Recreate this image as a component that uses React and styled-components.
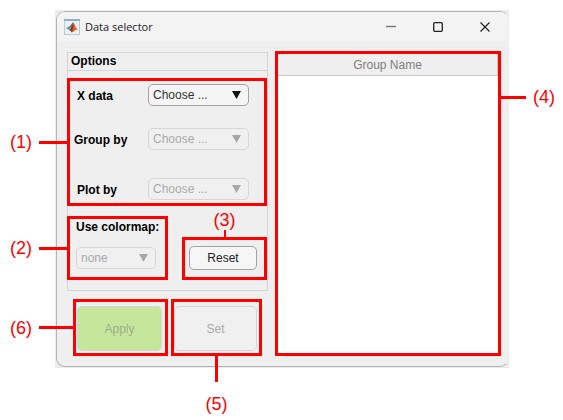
import React from "react";
import styled, { createGlobalStyle } from "styled-components";

const GlobalStyle = createGlobalStyle`
  *, *::before, *::after { box-sizing: border-box; }
  body {
    margin: 0;
    background: #fff;
    color: #000;
    font: 12px/16px "Liberation Sans", Arial, sans-serif;
  }
  button, select { font: inherit; margin: 0; }
`;

const RED = "#ff0000";

const Page = styled.main`
  padding: 10px 54px 48px 55px;
`;

const Backdrop = styled.div`
  padding: 1px 0 1px 1px;
  background: #ececec;
`;

const WindowFrame = styled.section`
  border: 1px solid #b4b4b4;
  border-right-color: #ececec;
  border-radius: 9px;
  background: #efefef;
`;

const TitleBar = styled.header`
  display: flex;
  align-items: center;
  height: 29px;
  padding-left: 7px;
  border-radius: 8px 8px 0 0;
  background: #f3f3f3;
`;

const Title = styled.h1`
  flex: 1;
  margin: 0 0 0 5px;
  font: 400 11px/16px "Open Sans", "Noto Sans", sans-serif;
  color: #222;
`;

const WindowButton = styled.button`
  display: grid;
  place-items: center;
  width: 47px;
  height: 29px;
  padding: 0;
  border: 0;
  background: transparent;
  color: #222;
`;

const Body = styled.div`
  display: grid;
  grid-template-columns: 201px minmax(0, 1fr);
  gap: 7px;
  padding: 10px 7px 10px 10px;
`;

const Controls = styled.div`
  display: flex;
  flex-direction: column;
  gap: 8px;
  padding-top: 1px;
`;

const Panel = styled.section`
  padding-bottom: 11px;
  box-shadow: inset 0 0 0 1px #d4d4d4;
`;

const PanelTitle = styled.h2`
  margin: 0;
  padding: 1px 4px;
  border-bottom: 1px solid #d4d4d4;
  font-size: 12px;
  line-height: 16px;
`;

const Region = styled.div`
  position: relative;
  border: 3px solid ${RED};
`;

const FieldsRegion = styled(Region)`
  display: grid;
  grid-template-columns: 78px 101px;
  grid-template-rows: 44px 50px 22px;
  align-items: start;
  margin: 7px 1px 0 0;
  padding: 3px 0;
`;

const LowerRow = styled.div`
  display: flex;
  justify-content: space-between;
  align-items: flex-end;
  margin: 10px 1px 0 0;
`;

const ColormapRegion = styled(Region)`
  display: flex;
  flex-direction: column;
  gap: 12px;
  width: 101px;
  height: 64px;
  padding: 0 6px;
`;

const ResetRegion = styled(Region)`
  width: 85px;
  padding: 6px 7px 7px 4px;
`;

const Actions = styled.div`
  display: flex;
  gap: 3px;
  padding-left: 6px;
`;

const ActionRegion = styled(Region)`
  width: ${(p) => p.$width};
  height: 57px;
  padding: ${(p) => p.$pad};
`;

const TableRegion = styled(Region)`
  background: #fff;
`;

const Label = styled.label`
  display: block;
  padding-left: ${(p) => p.$indent || "0"};
  font-weight: 700;
  line-height: ${(p) => (p.$compact ? "16px" : "25px")};
  white-space: nowrap;
`;

const SelectBox = styled.div`
  position: relative;
  color: ${(p) => (p.$off ? "#a8a8a8" : "#111")};
  width: ${(p) => p.$width};
`;

const Select = styled.select`
  display: block;
  appearance: none;
  width: 100%;
  height: 22px;
  padding: 0 20px 0 4px;
  border: 1px solid #a2a2a2;
  border-radius: 5px;
  background: #f5f5f5;
  color: #333;
  opacity: 1;

  &:disabled {
    border-color: #d6d6d6;
    background: #f0f0f0;
    color: #aaa;
  }
`;

const Arrow = styled.svg`
  position: absolute;
  top: 7px;
  right: 8px;
  pointer-events: none;
`;

const Button = styled.button`
  display: block;
  width: 100%;
  height: ${(p) => (p.$large ? "45px" : "24px")};
  padding: 0;
  border: 1px solid #a2a2a2;
  border-radius: 5px;
  background: #f6f6f6;
  color: #222;

  &:disabled {
    border-color: #d4d5d8;
    background: ${(p) => (p.$primary ? "#c6e69c" : "#f0f0f0")};
    color: ${(p) => (p.$primary ? "#9dae8c" : "#aaa")};
  }
`;

const Table = styled.table`
  width: 100%;
  border-collapse: separate;
  border-spacing: 0;
`;

const HeadCell = styled.th`
  height: 22px;
  padding: 0;
  border: solid #c6c6c6;
  border-width: 0 1px 1px 0;
  background: #efefef;
  color: #808080;
  font-weight: 400;
  line-height: 20px;
`;

const Callout = styled.div`
  position: absolute;
  display: flex;
  align-items: center;
  color: ${RED};
  font-size: 18px;
  line-height: 20px;
  pointer-events: none;
`;

const LeftCallout = styled(Callout)`
  right: 100%;
  top: 50%;
  gap: 7px;
  transform: translateY(-50%);
`;

const RightCallout = styled(Callout)`
  left: 100%;
  top: 33px;
  flex-direction: row-reverse;
  gap: 7px;
`;

const TopCallout = styled(Callout)`
  bottom: 100%;
  left: 50%;
  flex-direction: column;
  transform: translateX(-50%);
`;

const BottomCallout = styled(Callout)`
  top: 100%;
  left: 50%;
  flex-direction: column-reverse;
  gap: 12px;
  transform: translateX(-50%);
`;

const Leader = styled.i`
  width: ${(p) => (p.$vertical ? p.$weight || "3px" : p.$length)};
  height: ${(p) => (p.$vertical ? p.$length : "3px")};
  background: ${RED};
`;

function MatlabIcon() {
  return (
    <svg width="16" height="16" viewBox="0 0 16 16" aria-hidden="true">
      <rect x="0.5" y="0.5" width="15" height="15" fill="#eef2f5" stroke="#bccad6" />
      <path d="M0 0h16v2H0z" fill="#8fb0cc" />
      <path d="M2 9.2 5.2 7.6 7.2 8.6 5.4 11.2 4.2 10.6z" fill="#4a9cc8" />
      <path d="M5.2 7.6C6.8 7.2 7.6 4.2 9 3.4L7.2 8.8z" fill="#2c5f96" />
      <path d="M9 3.2C10.4 4 11.8 9 14 11.2 12.4 10.4 11.4 10.6 10.4 11.8 9.6 12.8 8.8 13.2 7.6 13.4 7.4 12 6.6 11.2 5.4 11.2 7.4 9.4 8 6.2 9 3.2z" fill="#dd6526" />
      <path d="M9 3.2C8.2 6.6 7.4 9.4 5.4 11.2 6.6 11 7.2 11.8 7.6 13.4 9.2 10.4 9.8 6.4 9 3.2z" fill="#96301f" />
    </svg>
  );
}

function Dropdown({ id, value, width, disabled }) {
  return (
    <SelectBox $width={width} $off={disabled}>
      <Select id={id} defaultValue={value} disabled={disabled}>
        <option>{value}</option>
      </Select>
      <Arrow width="9" height="8" viewBox="0 0 9 8" aria-hidden="true">
        <path d="M0 0h9L4.5 8z" fill="currentColor" />
      </Arrow>
    </SelectBox>
  );
}

const fields = [
  { id: "x-data", label: "X data", indent: "7px" },
  { id: "group-by", label: "Group by", indent: "4px", disabled: true },
  { id: "plot-by", label: "Plot by", indent: "7px", disabled: true },
];

export default function App() {
  return (
    <Page>
      <GlobalStyle />
      <Backdrop>
        <WindowFrame>
          <TitleBar>
            <MatlabIcon />
            <Title>Data selector</Title>
            <WindowButton aria-label="Minimize">
              <svg width="10" height="10"><path d="M0 4.5h10" stroke="#777" strokeWidth="1.4" /></svg>
            </WindowButton>
            <WindowButton aria-label="Maximize">
              <svg width="10" height="10">
                <rect x="0.7" y="0.7" width="8.6" height="8.6" rx="1" fill="none" stroke="currentColor" strokeWidth="1.3" />
              </svg>
            </WindowButton>
            <WindowButton aria-label="Close">
              <svg width="10" height="10"><path d="M0.5 0.5l9 9M9.5 0.5l-9 9" stroke="currentColor" strokeWidth="1.2" /></svg>
            </WindowButton>
          </TitleBar>
          <Body>
            <Controls>
              <Panel>
                <PanelTitle>Options</PanelTitle>
                <FieldsRegion>
                  {fields.map((f) => (
                    <React.Fragment key={f.id}>
                      <Label htmlFor={f.id} $indent={f.indent}>{f.label}</Label>
                      <Dropdown id={f.id} value="Choose ..." width="101px" disabled={f.disabled} />
                    </React.Fragment>
                  ))}
                  <LeftCallout>(1)<Leader $length="31px" /></LeftCallout>
                </FieldsRegion>
                <LowerRow>
                  <ColormapRegion>
                    <Label htmlFor="colormap" $compact>Use colormap:</Label>
                    <Dropdown id="colormap" value="none" width="80px" disabled />
                    <LeftCallout>(2)<Leader $length="31px" /></LeftCallout>
                  </ColormapRegion>
                  <ResetRegion>
                    <Button type="button">Reset</Button>
                    <TopCallout>(3)<Leader $vertical $weight="2px" $length="10px" /></TopCallout>
                  </ResetRegion>
                </LowerRow>
              </Panel>
              <Actions>
                <ActionRegion $width="95px" $pad="4px 3px 2px 1px">
                  <Button type="button" $large $primary disabled>Apply</Button>
                  <LeftCallout>(6)<Leader $length="37px" /></LeftCallout>
                </ActionRegion>
                <ActionRegion $width="91px" $pad="4px 2px 2px 0">
                  <Button type="button" $large disabled>Set</Button>
                  <BottomCallout>(5)<Leader $vertical $length="29px" /></BottomCallout>
                </ActionRegion>
              </Actions>
            </Controls>
            <TableRegion>
              <Table>
                <thead>
                  <tr><HeadCell scope="col">Group Name</HeadCell></tr>
                </thead>
              </Table>
              <RightCallout>(4)<Leader $length="28px" /></RightCallout>
            </TableRegion>
          </Body>
        </WindowFrame>
      </Backdrop>
    </Page>
  );
}
